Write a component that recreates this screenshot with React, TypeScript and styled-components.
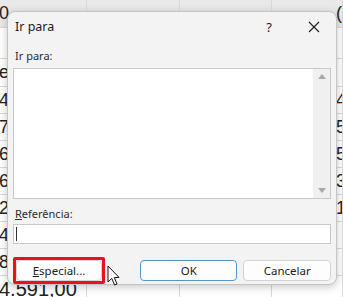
import React from "react";
import styled, { createGlobalStyle } from "styled-components";

const GlobalStyle = createGlobalStyle`
  html, body {
    margin: 0;
    padding: 0;
    background: #ffffff;
    overflow: hidden;
  }
  #root {
    width: 343px;
    height: 297px;
  }
`;

const Screen = styled.div`
  position: relative;
  width: 343px;
  height: 297px;
  overflow: hidden;
  background: #ffffff;
  font-family: "Segoe UI", "Noto Sans", "Open Sans", sans-serif;
`;

const Sheet = styled.div`
  display: flex;
  flex-direction: column;
  width: 343px;
`;

const SheetRow = styled.div<{ $h: number; $bg?: string }>`
  display: grid;
  grid-template-columns: 87px 93px 92px 71px;
  height: ${(p) => p.$h}px;
  background: ${(p) => p.$bg || "#ffffff"};
  border-bottom: 1px solid #d9d9d9;
  box-sizing: border-box;
`;

const Cell = styled.div<{ $pad?: number; $size?: number }>`
  border-right: 1px solid #d9d9d9;
  padding-left: ${(p) => p.$pad ?? 0}px;
  margin-left: ${(p) => (p.$pad === undefined ? -1 : 0)}px;
  font-family: "Liberation Sans", Arial, sans-serif;
  font-size: ${(p) => p.$size ?? 18}px;
  color: #222;
  line-height: 27px;
  white-space: nowrap;
  overflow: hidden;
`;

const Dialog = styled.div`
  position: absolute;
  left: 7px;
  top: 11px;
  width: 330px;
  height: 274px;
  box-sizing: border-box;
  background: #f3f3f3;
  border: 1px solid #c4c4c4;
  border-radius: 8px;
  box-shadow: 0 2px 8px rgba(0, 0, 0, 0.22);
  display: flex;
  flex-direction: column;
  padding: 0 5px;
  color: #1b1b1b;
`;

const TitleBar = styled.div`
  display: flex;
  align-items: center;
  height: 30px;
  padding-left: 2px;
  font-size: 12.5px;
`;

const Title = styled.div`
  flex: 1;
`;

const TitleButton = styled.div<{ $w: number }>`
  width: ${(p) => p.$w}px;
  display: flex;
  justify-content: center;
  align-items: center;
  font-size: 13px;
`;

const Label = styled.div<{ $top: number }>`
  margin-top: ${(p) => p.$top}px;
  padding-left: 2px;
  font-size: 11px;
  color: #2b2b2b;
  line-height: 14px;
  & u {
    text-decoration: underline;
  }
`;

const ListBox = styled.div`
  margin-top: 5px;
  height: 135px;
  background: #ffffff;
  border: 1px solid #c8c8c8;
  box-sizing: border-box;
  display: flex;
  justify-content: flex-end;
`;

const ScrollTrack = styled.div`
  width: 17px;
  background: #f0f0f0;
  display: flex;
  flex-direction: column;
  justify-content: space-between;
  align-items: center;
  padding: 5px 0;
`;

const Arrow = styled.div<{ $down?: boolean }>`
  width: 0;
  height: 0;
  border-left: 4px solid transparent;
  border-right: 4px solid transparent;
  ${(p) =>
    p.$down
      ? "border-top: 5px solid #a8a8a8;"
      : "border-bottom: 5px solid #a8a8a8;"}
`;

const Input = styled.div`
  margin-top: 3px;
  height: 21px;
  background: #ffffff;
  border: 1px solid #c8c8c8;
  box-sizing: border-box;
  display: flex;
  align-items: center;
  padding-left: 2px;
`;

const Caret = styled.div`
  width: 1px;
  height: 14px;
  background: #333;
`;

const Buttons = styled.div`
  margin-top: 13px;
  display: flex;
  align-items: center;
`;

const Highlight = styled.div`
  border: 3px solid #e8121b;
  border-radius: 2px;
  display: flex;
  margin-right: 35px;
`;

const Button = styled.div<{ $w: number; $primary?: boolean; $gap?: number }>`
  width: ${(p) => p.$w}px;
  height: 21px;
  margin-right: ${(p) => p.$gap ?? 0}px;
  box-sizing: border-box;
  background: #fdfdfd;
  border: 1px solid ${(p) => (p.$primary ? "#5a93c8" : "#d3d3d3")};
  border-radius: 4px;
  display: flex;
  justify-content: center;
  align-items: center;
  font-size: 11.5px;
  color: #1b1b1b;
  & u {
    text-decoration: underline;
  }
`;

const Cursor = styled.svg`
  position: absolute;
  left: 107px;
  top: 265px;
`;

const rows: { h: number; left: string; right: string }[] = [
  { h: 28, left: "0", right: "(" },
  { h: 31, left: "", right: "" },
  { h: 28, left: "e", right: "" },
  { h: 27, left: "4", right: "4" },
  { h: 27, left: "7", right: "5" },
  { h: 27, left: "6", right: "5" },
  { h: 27, left: "6", right: "3" },
  { h: 27, left: "2", right: "1" },
  { h: 27, left: "4", right: "" },
  { h: 27, left: "8", right: "" },
  { h: 27, left: "4.591,00", right: "" },
];

export default function App() {
  return (
    <Screen>
      <GlobalStyle />
      <Sheet>
        {rows.map((r, i) => (
          <SheetRow key={i} $h={r.h} $bg={i === 0 ? "#e9e9e9" : undefined}>
            <Cell $size={i === rows.length - 1 ? 20 : 18}>{r.left}</Cell>
            <Cell $pad={0} />
            <Cell $pad={0} />
            <Cell $pad={64}>{r.right}</Cell>
          </SheetRow>
        ))}
      </Sheet>

      <Dialog>
        <TitleBar>
          <Title>Ir para</Title>
          <TitleButton $w={56}>?</TitleButton>
          <TitleButton $w={34}>
            <svg width="12" height="12" viewBox="0 0 12 12">
              <path d="M1 1 L11 11 M11 1 L1 11" stroke="#1b1b1b" strokeWidth="1.1" fill="none" />
            </svg>
          </TitleButton>
        </TitleBar>
        <Label $top={8}>Ir para:</Label>
        <ListBox>
          <ScrollTrack>
            <Arrow />
            <Arrow $down />
          </ScrollTrack>
        </ListBox>
        <Label $top={8}>
          <u>R</u>eferência:
        </Label>
        <Input>
          <Caret />
        </Input>
        <Buttons>
          <Highlight>
            <Button $w={86}>
              <u>E</u>special...
            </Button>
          </Highlight>
          <Button $w={98} $primary $gap={6}>
            OK
          </Button>
          <Button $w={88}>Cancelar</Button>
        </Buttons>
      </Dialog>

      <Cursor width="13" height="22" viewBox="0 0 13 22">
        <path
          d="M1 1 L1 17 L4.8 13.4 L7.6 20 L10 19 L7.3 12.6 L12 12.4 Z"
          fill="#ffffff"
          stroke="#111"
          strokeWidth="1"
          strokeLinejoin="round"
        />
      </Cursor>
    </Screen>
  );
}
